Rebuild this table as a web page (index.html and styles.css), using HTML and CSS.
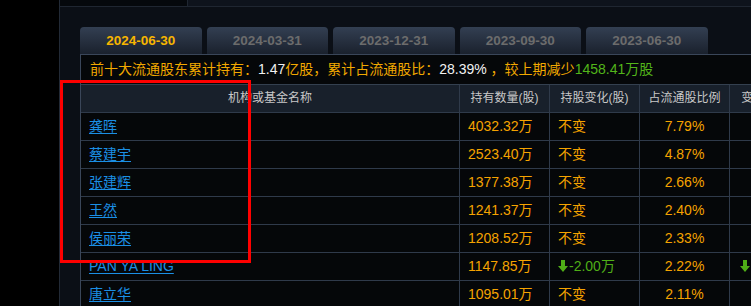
FILE: index.html
```html
<!DOCTYPE html>
<html lang="zh">
<head>
<meta charset="utf-8">
<link rel="stylesheet" href="styles.css">
</head>
<body>
<div class="page">
  <div class="gutter"></div>
  <div class="panel">
    <div class="topbar"><div class="tb-a"></div><div class="tb-b"></div></div>
    <div class="content">
      <div class="tabs">
        <div class="tab active">2024-06-30</div>
        <div class="tab">2024-03-31</div>
        <div class="tab">2023-12-31</div>
        <div class="tab">2023-09-30</div>
        <div class="tab">2023-06-30</div>
      </div>
      <div class="box">
        <div class="summary"><span class="o">前十大流通股东累计持有：</span><span class="w">1.47</span><span class="o">亿股，累计占流通股比：</span><span class="w">28.39%</span><span class="o"> ，较上期减少</span><span class="g">1458.41万股</span></div>
        <div class="row head">
          <div class="c name">机构或基金名称</div>
          <div class="c">持有数量(股)</div>
          <div class="c">持股变化(股)</div>
          <div class="c">占流通股比例</div>
          <div class="c">变动比例(%)</div>
        </div>
        <div class="row">
          <div class="c name"><a class="link">龚晖</a></div>
          <div class="c amt">4032.32万</div>
          <div class="c chg">不变</div>
          <div class="c pct">7.79%</div>
          <div class="c"></div>
        </div>
        <div class="row">
          <div class="c name"><a class="link">蔡建宇</a></div>
          <div class="c amt">2523.40万</div>
          <div class="c chg">不变</div>
          <div class="c pct">4.87%</div>
          <div class="c"></div>
        </div>
        <div class="row">
          <div class="c name"><a class="link">张建辉</a></div>
          <div class="c amt">1377.38万</div>
          <div class="c chg">不变</div>
          <div class="c pct">2.66%</div>
          <div class="c"></div>
        </div>
        <div class="row">
          <div class="c name"><a class="link">王然</a></div>
          <div class="c amt">1241.37万</div>
          <div class="c chg">不变</div>
          <div class="c pct">2.40%</div>
          <div class="c"></div>
        </div>
        <div class="row">
          <div class="c name"><a class="link">侯丽荣</a></div>
          <div class="c amt">1208.52万</div>
          <div class="c chg">不变</div>
          <div class="c pct">2.33%</div>
          <div class="c"></div>
        </div>
        <div class="row">
          <div class="c name"><a class="link">PAN YA LING</a></div>
          <div class="c amt">1147.85万</div>
          <div class="c chg down"><svg class="arrow" width="10" height="12" viewBox="0 0 10 12"><path d="M3 0h4v6h3l-5 6-5-6h3z"/></svg>-2.00万</div>
          <div class="c pct">2.22%</div>
          <div class="c last"><svg class="arrow" width="10" height="12" viewBox="0 0 10 12"><path d="M3 0h4v6h3l-5 6-5-6h3z"/></svg></div>
        </div>
        <div class="row">
          <div class="c name"><a class="link">唐立华</a></div>
          <div class="c amt">1095.01万</div>
          <div class="c chg">不变</div>
          <div class="c pct">2.11%</div>
          <div class="c"></div>
        </div>
      </div>
    </div>
  </div>
</div>
<div class="highlight"></div>
</body>
</html>
```
FILE: styles.css
```css
html, body {
  margin: 0;
  padding: 0;
  background: #000;
}
body {
  width: 751px;
  height: 306px;
  overflow: hidden;
  position: relative;
  font-family: "Liberation Sans", "Noto Sans CJK SC", sans-serif;
}
.page {
  display: flex;
  height: 306px;
}
.gutter {
  width: 59px;
  background: #000;
  border-right: 1px solid #222a36;
}
.panel {
  flex: 1;
  background: #0b0f16;
  overflow: hidden;
}
.topbar {
  display: flex;
  height: 6px;
  border-bottom: 1px solid #1f2631;
}
.tb-a {
  width: 127px;
  background: #05080c;
  border-right: 1px solid #1f2631;
}
.tb-b {
  flex: 1;
  background: #0e131c;
}
.content {
  padding: 20px 0 0 20px;
}
.tabs {
  display: flex;
  gap: 5px;
  height: 27px;
}
.tab {
  width: 121.5px;
  flex: none;
  border-radius: 4px 4px 0 0;
  background: linear-gradient(#333f52, #1a212d);
  color: #6c6c6c;
  font-weight: bold;
  font-size: 13.5px;
  line-height: 27px;
  text-align: center;
}
.tab.active {
  color: #f7b500;
}
.box {
  border-top: 1px solid #3a4659;
  border-left: 1px solid #3a4659;
  background: #050709;
  width: 760px;
}
.summary {
  height: 29px;
  line-height: 29px;
  padding-left: 9px;
  font-size: 14px;
  white-space: nowrap;
  border-bottom: 1px solid #34404f;
}
.o { color: #f2a900; }
.w { color: #f2f2f2; }
.g { color: #52b51a; }
.row {
  display: grid;
  grid-template-columns: 379px 90px 90px 90px 90px;
  height: 28px;
  border-bottom: 1px solid #2f3a4a;
  box-sizing: border-box;
}
.row.head {
  background: #18202b;
}
.c {
  box-sizing: border-box;
  border-right: 1px solid #2f3a4a;
  line-height: 27px;
  font-size: 14px;
  color: #f5a300;
  white-space: nowrap;
  overflow: hidden;
  padding-left: 8px;
}
.head .c {
  font-size: 12px;
  color: #c8c8c8;
  text-align: center;
  padding-left: 0;
}
.link {
  color: #1b8fe4;
  text-decoration: underline;
  text-underline-offset: 2px;
}
.pct {
  text-align: center;
  padding-left: 0;
}
.down {
  color: #4fae17;
}
.arrow {
  fill: #4fae17;
  vertical-align: -1px;
  margin-right: 1px;
}
.last {
  padding-left: 10px;
}
.highlight {
  position: absolute;
  left: 60px;
  top: 80px;
  width: 191px;
  height: 183px;
  border: 3px solid #ff0000;
  box-sizing: border-box;
}
```
